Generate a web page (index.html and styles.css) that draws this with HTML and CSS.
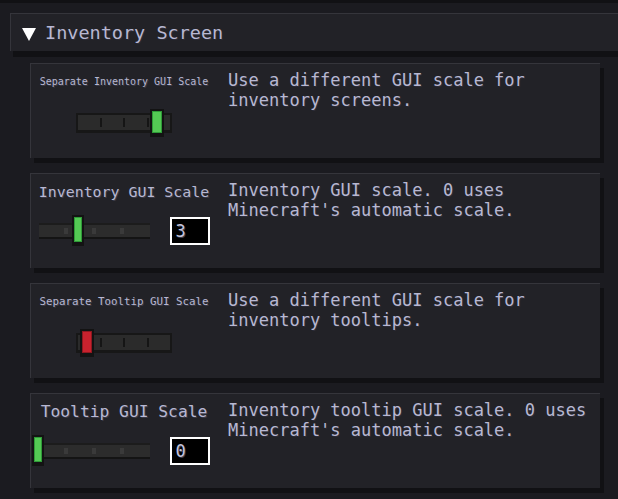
FILE: index.html
```html
<!DOCTYPE html>
<html lang="en">
<head>
<meta charset="UTF-8">
<meta name="viewport" content="width=device-width, initial-scale=1.0">
<title>Inventory Screen Settings</title>
<link rel="stylesheet" href="styles.css">
</head>
<body>
<div class="top-edge"></div>
<div class="section">
    <div class="section-header">
        <svg class="arrow" width="14" height="14" viewBox="0 0 14 14"><polygon points="0,1 14,1 7,14" fill="#fff"/></svg>
        <span class="section-title">Inventory Screen</span>
    </div>

    <div class="options">
        <!-- toggle: separate inventory scale -->
        <div class="option">
            <div class="control">
                <div class="label label-tiny">Separate Inventory GUI Scale</div>
                <div class="toggle toggle-on">
                    <span class="tick"></span><span class="tick"></span><span class="tick"></span>
                    <span class="knob knob-green"></span>
                </div>
            </div>
            <div class="desc">Use a different GUI scale for<br>inventory screens.</div>
        </div>

        <div class="option">
            <div class="control">
                <div class="label label-mid">Inventory GUI Scale</div>
                <div class="range-row">
                    <div class="range">
                        <span class="dot"></span><span class="dot"></span><span class="dot"></span>
                        <span class="range-knob knob-green" style="left: 33px"></span>
                    </div>
                    <div class="num">3</div>
                </div>
            </div>
            <div class="desc">Inventory GUI scale. 0 uses<br>Minecraft's automatic scale.</div>
        </div>

        <div class="option">
            <div class="control">
                <div class="label label-small">Separate Tooltip GUI Scale</div>
                <div class="toggle toggle-off">
                    <span class="tick"></span><span class="tick"></span><span class="tick"></span>
                    <span class="knob knob-red"></span>
                </div>
            </div>
            <div class="desc">Use a different GUI scale for<br>inventory tooltips.</div>
        </div>

        <div class="option">
            <div class="control">
                <div class="label label-big">Tooltip GUI Scale</div>
                <div class="range-row">
                    <div class="range">
                        <span class="dot"></span><span class="dot"></span><span class="dot"></span>
                        <span class="range-knob knob-green" style="left: -7px"></span>
                    </div>
                    <div class="num">0</div>
                </div>
            </div>
            <div class="desc">Inventory tooltip GUI scale. 0 uses<br>Minecraft's automatic scale.</div>
        </div>
    </div>
</div>
</body>
</html>
```

FILE: styles.css
```css
body {
    margin: 0;
    padding: 0;
    background-color: #1b1b20;
    font-family: "DejaVu Sans Mono", "Liberation Mono", monospace;
    color: #b8b8d2;
    overflow: hidden;
    height: 499px;
}
.top-edge {
    height: 3px;
    background-color: #111114;
}
.section {
    padding-left: 10px;
    padding-top: 10px;
}
.section-header {
    display: flex;
    align-items: center;
    height: 37px;
    margin-right: -20px;
    padding-left: 11px;
    background-color: #222227;
    border-top: 1px solid #35353b;
    border-left: 1px solid #35353b;
    box-shadow: 3px 6px 0 #111114;
}
.arrow {
    margin-right: 9px;
    margin-top: 2px;
}
.section-title {
    font-size: 18.5px;
    text-shadow: 1px 1px 0 #2c2c38;
}
.options {
    display: flex;
    flex-direction: column;
    gap: 15px;
    padding-left: 20px;
    margin-top: 12px;
}
.option {
    display: flex;
    width: 569px;
    height: 94px;
    background-color: #222227;
    border-top: 1px solid #35353b;
    border-left: 1px solid #35353b;
    box-shadow: 4px 5px 0 #111114;
}
.control {
    width: 186px;
    flex-shrink: 0;
    display: flex;
    flex-direction: column;
    align-items: center;
    padding-top: 5px;
}
.label {
    height: 26px;
    line-height: 26px;
    white-space: nowrap;
    text-shadow: 1px 1px 0 #3a3a48;
}
.label-tiny { font-size: 10px; }
.label-small { font-size: 10.8px; }
.label-mid { font-size: 14.9px; }
.label-big { font-size: 16.3px; }
.desc {
    margin-left: 11px;
    padding-top: 6px;
    font-size: 17px;
    line-height: 20px;
    white-space: nowrap;
    text-shadow: 1px 1px 0 #2c2c38;
}

/* on/off slider */
.toggle {
    position: relative;
    display: flex;
    justify-content: space-evenly;
    align-items: center;
    width: 92px;
    height: 15px;
    margin-top: 18px;
    background-color: #2b2b2b;
    border: 2px solid #171717;
    border-bottom-width: 3px;
}
.tick {
    width: 2px;
    height: 9px;
    background-color: #151515;
}
.knob {
    position: absolute;
    top: -6px;
    width: 10px;
    height: 22px;
    border: 2px solid #131313;
    border-bottom-width: 4px;
}
.toggle-on .knob { left: 72px; }
.toggle-off .knob { left: 2px; }

.knob-green {
    background-color: #54c954;
    box-shadow: inset 0 0 0 1px #2f9b38;
}
.knob-red {
    background-color: #c8222e;
    box-shadow: inset 0 0 0 1px #8f1820;
}

/* numeric slider with value box */
.range-row {
    display: flex;
    align-items: center;
    gap: 20px;
    margin-top: 12px;
}
.range {
    position: relative;
    display: flex;
    justify-content: space-evenly;
    align-items: center;
    width: 107px;
    height: 12px;
    padding: 0 2px;
    background-color: #2c2c2c;
    border-top: 2px solid #1c1c1c;
    border-bottom: 2px solid #141414;
}
.dot {
    width: 4px;
    height: 6px;
    background-color: #3a3a3a;
}
.range-knob {
    position: absolute;
    top: -10px;
    width: 8px;
    height: 25px;
    border: 2px solid #131313;
    border-bottom-width: 4px;
}
.num {
    width: 32px;
    height: 24px;
    padding-left: 4px;
    background-color: #000;
    border: 2px solid #fff;
    font-size: 17px;
    line-height: 24px;
    color: #c4c4dc;
    text-shadow: 1px 1px 0 #3a3a48;
}
```
